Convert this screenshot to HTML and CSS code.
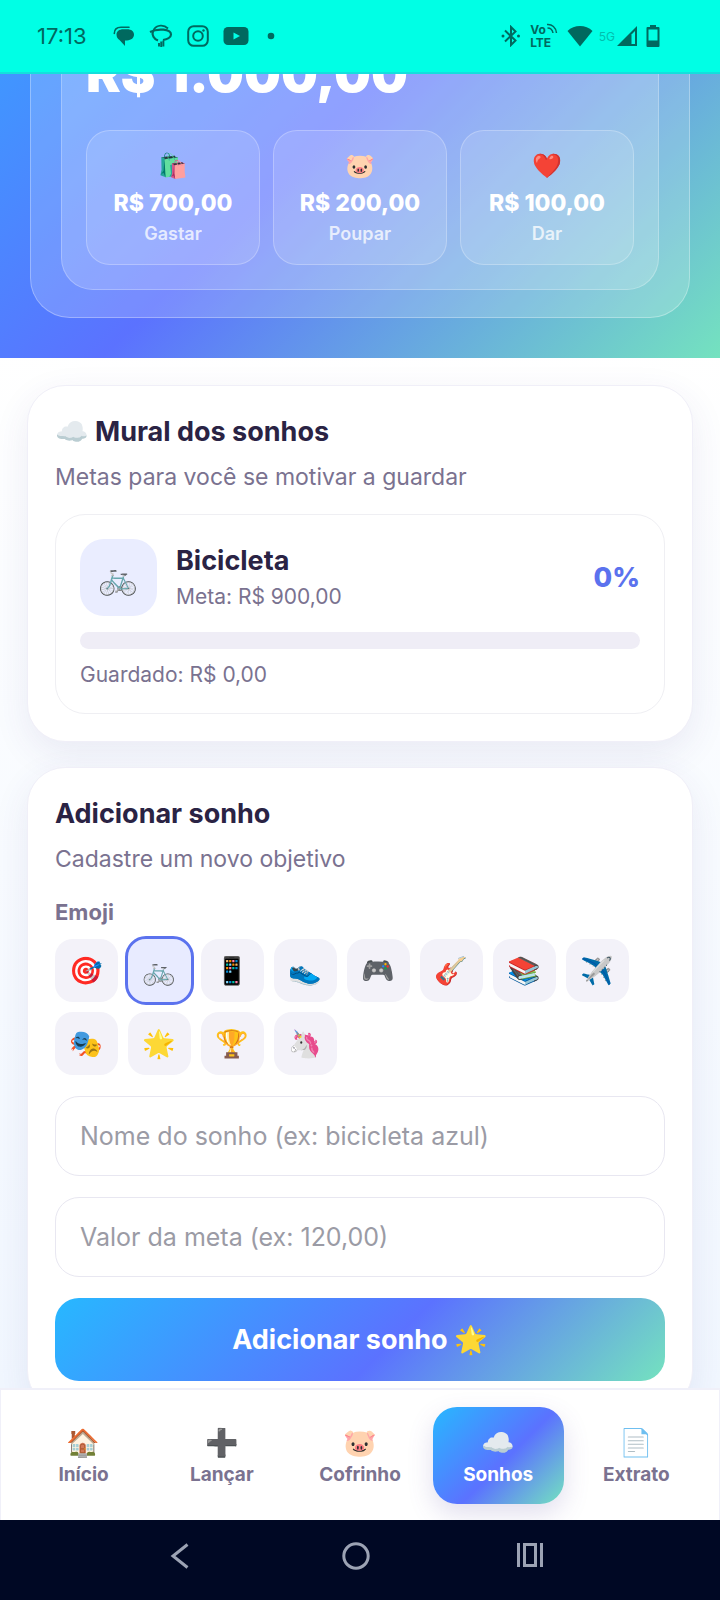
FILE: index.html
```html
<!DOCTYPE html>
<html lang="pt-BR">
<head>
<meta charset="utf-8">
<meta name="viewport" content="width=device-width, initial-scale=1">
<title>Sonhos</title>
<link rel="stylesheet" href="styles.css">
</head>
<body>
<div class="screen">
  <header class="status">
    <div class="status-left">
      <span class="clock">17:13</span>
      <svg width="22" height="22" viewBox="0 0 22 22" fill="currentColor"><path d="M10.500 4.200H14C18.500 4.200 21 6.300 21 9.600S18.500 15.400 14 15.400H12V21L6.500 15C4.600 14 3.500 12 3.500 9.600C3.500 6.300 6 4.200 10.500 4.200Z"/><path d="M1.300 8.500C1.300 4.500 4 2.200 8 2.200H16" fill="none" stroke="currentColor" stroke-width="1.600" stroke-linecap="round"/></svg>
      <svg width="24" height="24" viewBox="0 0 24 24" fill="none" stroke="currentColor"><path d="M4.500 6C8 .5 15 .5 19 4.500" stroke-width="1.800"/><path d="M1 8C9 4 22 5 22 10.500C22 13.500 18 15.500 14 16" stroke-width="2.200"/><path d="M4 7C2.500 11 5 15 9 16.500" stroke-width="2.200"/><path d="M10 19V22.500M12.200 17.500V23M14.400 16.500V22.500" stroke-width="1.900"/></svg>
      <svg width="22" height="22" viewBox="0 0 22 22" fill="none" stroke="currentColor" stroke-width="2"><rect x="1.200" y="1.200" width="19.600" height="19.600" rx="5.500"/><circle cx="11" cy="11" r="4.800"/><circle cx="16.500" cy="5.500" r="1.200" fill="currentColor" stroke="none"/></svg>
      <svg width="26" height="20" viewBox="0 0 26 20"><rect x=".5" y="1" width="25" height="18" rx="4.500" fill="currentColor"/><path d="M10.500 6.500L17 10L10.500 13.500Z" fill="#00ffe5"/></svg>
      <svg width="20" height="20" viewBox="0 0 20 20"><circle cx="8" cy="10" r="3.300" fill="currentColor"/></svg>
    </div>
    <div class="status-right">
      <svg width="20" height="22" viewBox="0 0 20 22" fill="none" stroke="currentColor" stroke-width="2"><path d="M4 5.500L14.500 15.500L10 20V2L14.500 6.500L4 16.500"/><circle cx="2" cy="11" r="1.500" fill="currentColor" stroke="none"/><circle cx="17.500" cy="11" r="1.500" fill="currentColor" stroke="none"/></svg>
      <div class="volte">
        <span class="volte-top">Vo<svg width="12" height="11" viewBox="0 0 12 11" fill="none" stroke="currentColor" stroke-width="1.500"><path d="M1 1.500C6 1 10 4.500 10.500 10M1.500 5C4.500 5 6.500 7 7 10"/></svg></span>
        <span>LTE</span>
      </div>
      <svg width="26" height="22" viewBox="0 0 26 22" fill="currentColor"><path d="M.5 6C7-.8 19-.8 25.500 6L13 21.500Z"/></svg>
      <div class="mobile">
        <span class="net">5G</span>
        <svg width="20" height="20" viewBox="0 0 20 20"><path d="M0 20L20 0V20Z" fill="currentColor"/><path d="M14.500 8.500L18 5V18H14.500Z" fill="#00ffe5"/></svg>
      </div>
      <svg width="14" height="22" viewBox="0 0 14 22"><path d="M4 0H10V2H12.500Q13.500 2 13.500 3V21Q13.500 22 12.500 22H1.500Q.5 22 .5 21V3Q.5 2 1.500 2H4Z" fill="currentColor"/><rect x="2.500" y="4.500" width="9" height="11" fill="#00ffe5"/></svg>
    </div>
  </header>

  <main class="content">
    <section class="hero">
      <div class="glass">
        <div class="balance">
          <p class="amount">R$ 1.000,00</p>
          <div class="stats">
            <div class="stat"><span class="stat-icon">🛍️</span><strong>R$ 700,00</strong><span class="stat-label">Gastar</span></div>
            <div class="stat"><span class="stat-icon">🐷</span><strong>R$ 200,00</strong><span class="stat-label">Poupar</span></div>
            <div class="stat"><span class="stat-icon">❤️</span><strong>R$ 100,00</strong><span class="stat-label">Dar</span></div>
          </div>
        </div>
      </div>
    </section>

    <div class="cards">
      <section class="card">
        <h2>☁️ Mural dos sonhos</h2>
        <p class="sub">Metas para você se motivar a guardar</p>
        <article class="goal">
          <div class="goal-head">
            <span class="goal-icon">🚲</span>
            <div class="goal-text">
              <h3>Bicicleta</h3>
              <p>Meta: R$ 900,00</p>
            </div>
            <strong class="percent">0%</strong>
          </div>
          <div class="bar" role="progressbar" aria-label="Bicicleta" aria-valuenow="0" aria-valuemin="0" aria-valuemax="100"><div class="fill" style="width:0%"></div></div>
          <p class="saved">Guardado: R$ 0,00</p>
        </article>
      </section>

      <section class="card">
        <h2>Adicionar sonho</h2>
        <p class="sub">Cadastre um novo objetivo</p>
        <form class="form">
          <div class="picker" role="group" aria-labelledby="emoji-label">
            <span class="label" id="emoji-label">Emoji</span>
            <div class="chips">
              <button type="button" class="chip">🎯</button>
              <button type="button" class="chip chip-on" aria-pressed="true">🚲</button>
              <button type="button" class="chip">📱</button>
              <button type="button" class="chip">👟</button>
              <button type="button" class="chip">🎮</button>
              <button type="button" class="chip">🎸</button>
              <button type="button" class="chip">📚</button>
              <button type="button" class="chip">✈️</button>
              <button type="button" class="chip">🎭</button>
              <button type="button" class="chip">🌟</button>
              <button type="button" class="chip">🏆</button>
              <button type="button" class="chip">🦄</button>
            </div>
          </div>
          <input class="field" type="text" aria-label="Nome do sonho" placeholder="Nome do sonho (ex: bicicleta azul)">
          <input class="field" type="text" inputmode="decimal" aria-label="Valor da meta" placeholder="Valor da meta (ex: 120,00)">
          <button type="button" class="submit">Adicionar sonho 🌟</button>
        </form>
      </section>
    </div>
  </main>

  <nav class="tabs">
    <a class="tab" href="#inicio"><span class="tab-icon">🏠</span>Início</a>
    <a class="tab" href="#lancar"><span class="tab-icon">➕</span>Lançar</a>
    <a class="tab" href="#cofrinho"><span class="tab-icon">🐷</span>Cofrinho</a>
    <a class="tab tab-on" href="#sonhos" aria-current="page"><span class="tab-icon">☁️</span>Sonhos</a>
    <a class="tab" href="#extrato"><span class="tab-icon">📄</span>Extrato</a>
  </nav>

  <footer class="system">
    <button type="button" class="sys" aria-label="Voltar"><svg width="28" height="28" viewBox="0 0 28 28"><path d="M20.500 2.500L6 14L20.500 25.500"/></svg></button>
    <button type="button" class="sys" aria-label="Tela inicial"><svg width="28" height="28" viewBox="0 0 28 28"><circle cx="14" cy="14" r="12.200"/></svg></button>
    <button type="button" class="sys" aria-label="Recentes"><svg width="28" height="28" viewBox="0 0 28 28"><path d="M1.500 1V25M24.500 1V25M7.500 2.500H18.500V23.500H7.500Z"/></svg></button>
  </footer>
</div>
</body>
</html>
```
FILE: styles.css
```css
* { box-sizing: border-box; }

body, h2, h3, p { margin: 0; }

body {
  font-family: Inter, "Noto Sans", "Noto Color Emoji", sans-serif;
  color: #2a2344;
}

button, input { font: inherit; }

.screen {
  display: flex;
  flex-direction: column;
  height: 100vh;
  overflow: hidden;
}

.status {
  flex: none;
  display: flex;
  justify-content: space-between;
  align-items: center;
  height: 74px;
  padding: 0 60px 0 37px;
  background: #00ffe5;
  border-bottom: 2px solid #14dfdc;
  color: #00695f;
}

.status-left, .status-right, .mobile {
  display: flex;
  align-items: center;
}

.status-left { gap: 14px; }
.status-right { gap: 9px; }
.mobile { gap: 2px; margin-left: -3px; }

.clock {
  width: 62px;
  font-size: 22px;
  line-height: 24px;
}

.volte {
  display: flex;
  flex-direction: column;
  font-size: 12px;
  font-weight: 700;
  line-height: 13px;
}

.volte-top { display: flex; }

.net {
  font-size: 12px;
  color: #00bfae;
}

.content {
  flex: 1;
  min-height: 0;
  overflow: hidden;
  background: linear-gradient(#ffffff 20%, #f1f7ff);
}

/* The page is scrolled: only the lower part of the hero is in view. */
.hero {
  display: flex;
  min-height: 653px;
  margin-top: -369px;
  padding: 40px 30px;
  background: linear-gradient(135deg, #27b8ff, #5b72ff 55%, #74e2bf);
  color: #fff;
}

.glass {
  flex: 1;
  display: flex;
  padding: 27px 30px;
  border: 1px solid rgba(255, 255, 255, .3);
  border-radius: 40px;
  background: rgba(255, 255, 255, .18);
}

.balance {
  flex: 1;
  display: flex;
  flex-direction: column;
  justify-content: flex-end;
  gap: 22px;
  padding: 24px;
  border: 1px solid rgba(255, 255, 255, .25);
  border-radius: 32px;
  background: rgba(255, 255, 255, .18);
}

.amount {
  font-size: 52px;
  font-weight: 900;
  line-height: 68px;
}

.stats {
  display: grid;
  grid-template-columns: repeat(3, 1fr);
  gap: 13px;
}

.stat {
  display: flex;
  flex-direction: column;
  align-items: center;
  padding: 18px 8px;
  border: 1px solid rgba(255, 255, 255, .25);
  border-radius: 24px;
  background: rgba(255, 255, 255, .12);
}

.stat-icon {
  margin-bottom: 2px;
  font-size: 24px;
  line-height: 33px;
}

.stat strong {
  font-size: 23px;
  font-weight: 800;
  line-height: 38px;
}

.stat-label {
  font-size: 18px;
  font-weight: 600;
  line-height: 24px;
  opacity: .75;
}

.cards {
  display: flex;
  flex-direction: column;
  gap: 25px;
  padding: 27px;
}

.card {
  padding: 27px;
  border: 1px solid #f0eff8;
  border-radius: 38px;
  background: #fff;
  box-shadow: 0 12px 36px rgba(70, 60, 130, .09);
}

.card h2 {
  font-size: 27px;
  font-weight: 700;
  line-height: 38px;
}

.sub {
  margin: 9px 0 20px;
  color: #7a7290;
  font-size: 23px;
  line-height: 34px;
}

.goal {
  display: flex;
  flex-direction: column;
  gap: 16px;
  padding: 24px 24px 21px;
  border: 1px solid #efeff3;
  border-radius: 30px;
}

.goal-head {
  display: flex;
  align-items: center;
  gap: 19px;
}

.goal-icon {
  display: grid;
  place-items: center;
  width: 77px;
  height: 77px;
  border-radius: 24px;
  background: #eaedff;
  font-size: 32px;
}

.goal-text { flex: 1; }

.goal h3 {
  font-size: 27px;
  font-weight: 700;
  line-height: 38px;
}

.goal p {
  color: #7a7290;
  font-size: 21px;
  line-height: 34px;
}

.percent {
  color: #5b72ee;
  font-size: 27px;
  font-weight: 800;
}

.bar {
  height: 17px;
  overflow: hidden;
  border-radius: 9px;
  background: #efedf6;
}

.fill {
  height: 100%;
  background: #5b72ff;
}

.goal .saved { margin-top: -7px; }

.form, .picker {
  display: flex;
  flex-direction: column;
}

.form { gap: 21px; }
.picker { gap: 11px; }

.label {
  color: #7a7290;
  font-size: 22px;
  font-weight: 700;
  line-height: 32px;
}

.chips {
  display: flex;
  flex-wrap: wrap;
  gap: 10px;
}

.chip {
  width: 63px;
  height: 63px;
  padding: 0;
  border: 0;
  border-radius: 18px;
  background: #f3f2f9;
  font-size: 27px;
}

.chip-on {
  background: #e8ebff;
  outline: 3px solid #5b72ee;
}

.field {
  width: 100%;
  height: 80px;
  padding: 0 24px;
  border: 1px solid #e8e7f1;
  border-radius: 24px;
  background: #fff;
  font-size: 25px;
}

.field::placeholder { color: #9b9ba5; opacity: 1; }

.submit {
  height: 83px;
  border: 0;
  border-radius: 24px;
  background: linear-gradient(135deg, #27b8ff, #5b72ff 55%, #74e2bf);
  color: #fff;
  font-size: 27px;
  font-weight: 700;
}

.tabs {
  flex: none;
  display: grid;
  grid-template-columns: repeat(5, 1fr);
  gap: 7px;
  padding: 17px 17px 16px;
  border: 1px solid #f0f0f9;
  border-top-width: 2px;
  border-bottom: 0;
  background: #fff;
}

.tab {
  display: flex;
  flex-direction: column;
  align-items: center;
  padding: 18px 0 15px;
  border-radius: 24px;
  color: #7a7290;
  font-size: 19px;
  font-weight: 700;
  line-height: 28px;
  text-decoration: none;
}

.tab-icon {
  font-size: 27px;
  line-height: 36px;
}

.tab-on {
  background: linear-gradient(135deg, #27b8ff, #5b72ff 55%, #74e2bf);
  color: #fff;
  box-shadow: 0 10px 26px rgba(90, 70, 160, .18);
}

.system {
  flex: none;
  display: flex;
  justify-content: center;
  gap: 135px;
  height: 80px;
  padding: 16px 8px 24px 0;
  background: #000824;
}

.sys {
  display: grid;
  place-items: center;
  width: 40px;
  height: 40px;
  padding: 0;
  border: 0;
  background: none;
}

.sys svg {
  fill: none;
  stroke: #9ca3b4;
  stroke-width: 3;
}
```
